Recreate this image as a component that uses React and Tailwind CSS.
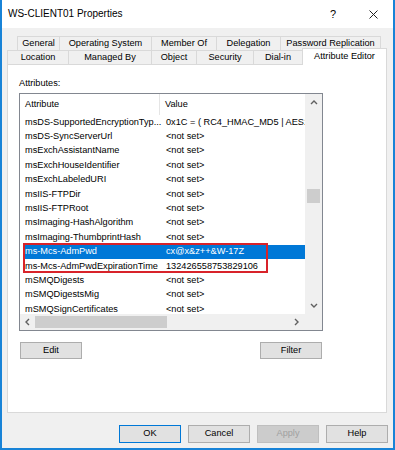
import React from 'react';

const topTabs = [
  { label: 'General', w: 'w-[42px]' },
  { label: 'Operating System', w: 'w-[92px]' },
  { label: 'Member Of', w: 'w-[65px]' },
  { label: 'Delegation', w: 'w-[64px]' },
  { label: 'Password Replication', w: 'w-[101px]' },
];

const bottomTabs = [
  { label: 'Location', w: 'w-[61px]' },
  { label: 'Managed By', w: 'w-[83px]' },
  { label: 'Object', w: 'w-[45px]' },
  { label: 'Security', w: 'w-[57px]' },
  { label: 'Dial-in', w: 'w-[49px]' },
];

const rows = [
  ['msDS-SupportedEncryptionTyp...', '0x1C = ( RC4_HMAC_MD5 | AES128_CTS_HMAC_SHA1_96 )'],
  ['msDS-SyncServerUrl', '<not set>'],
  ['msExchAssistantName', '<not set>'],
  ['msExchHouseIdentifier', '<not set>'],
  ['msExchLabeledURI', '<not set>'],
  ['msIIS-FTPDir', '<not set>'],
  ['msIIS-FTPRoot', '<not set>'],
  ['msImaging-HashAlgorithm', '<not set>'],
  ['msImaging-ThumbprintHash', '<not set>'],
  ['ms-Mcs-AdmPwd', 'cx@x&z++&W-17Z'],
  ['ms-Mcs-AdmPwdExpirationTime', '132426558753829106'],
  ['mSMQDigests', '<not set>'],
  ['mSMQDigestsMig', '<not set>'],
  ['mSMQSignCertificates', '<not set>'],
];

const Chevron = ({ dir }) => {
  const d = {
    up: 'M1 5 L4 2 L7 5',
    down: 'M1 2 L4 5 L7 2',
    left: 'M5 1 L2 4 L5 7',
    right: 'M2 1 L5 4 L2 7',
  }[dir];
  return (
    <svg width="8" height="8" viewBox="0 0 8 8">
      <path d={d} fill="none" stroke="#606060" strokeWidth="1.4" />
    </svg>
  );
};

const Button = ({ children, focused, disabled }) => (
  <div
    className={`w-[62px] h-[18px] flex items-center justify-center border ${
      focused ? 'border-[#0078d7]' : disabled ? 'border-[#bfbfbf]' : 'border-[#adadad]'
    } ${disabled ? 'bg-[#cccccc] text-[#a0a0a0]' : 'bg-[#e1e1e1] text-black'}`}
  >
    {children}
  </div>
);

export default function App() {
  return (
    <div className="w-[395px] h-[450px] bg-[#f0f0f0] border-x-2 border-b-2 border-[#1883d7] flex flex-col font-['Liberation_Sans',Arial,sans-serif] text-[9.2px] text-black overflow-hidden leading-none">
      {/* Title bar */}
      <div className="h-[28px] bg-white flex items-center shrink-0">
        <span className="pl-[6px] text-[10px]">WS-CLIENT01 Properties</span>
        <span className="ml-auto mr-[33px] text-[11px]">?</span>
        <svg width="9" height="9" viewBox="0 0 9 9" className="mr-[15px]">
          <path d="M0.5 0.5 L8.5 8.5 M8.5 0.5 L0.5 8.5" stroke="#222" strokeWidth="1" />
        </svg>
      </div>

      <div className="flex flex-col pl-[5px] pt-[8px]">
        {/* Tabs, row 1 */}
        <div className="flex ml-[10px] h-[14px]">
          {topTabs.map((t, i) => (
            <div
              key={t.label}
              className={`${t.w} h-full flex items-center justify-center border-t border-l border-[#d9d9d9] bg-[#f0f0f0] ${
                i === topTabs.length - 1 ? 'border-r' : ''
              }`}
            >
              {t.label}
            </div>
          ))}
        </div>
        {/* Tabs, row 2 */}
        <div className="flex h-[14px]">
          {bottomTabs.map((t) => (
            <div
              key={t.label}
              className={`${t.w} h-full flex items-center justify-center border-t border-l border-[#d9d9d9] bg-[#f0f0f0]`}
            >
              {t.label}
            </div>
          ))}
          <div className="relative z-10 -mt-[2px] w-[85px] h-[17px] flex items-center justify-center border-t border-x border-[#d9d9d9] bg-white">
            Attribute Editor
          </div>
        </div>

        {/* Panel */}
        <div className="w-[380px] h-[349px] bg-white border border-[#d9d9d9] flex flex-col pl-[11px] pt-[13px]">
          <div className="h-[12px] flex items-center">Attributes:</div>

          <div className="relative mt-[3px] w-[304px] h-[238px] border border-[#828790] flex flex-col">
            <div className="flex h-[220px]">
              {/* Columns */}
              <div className="w-[285px] flex flex-col overflow-hidden">
                <div className="h-[21px] flex items-center shrink-0">
                  <div className="w-[140px] shrink-0 pl-[5px] h-full flex items-center border-r border-[#e5e5e5]">Attribute</div>
                  <div className="pl-[5px]">Value</div>
                </div>
                {rows.map(([a, v], i) => (
                  <div
                    key={a}
                    className={`ml-[3px] h-[14.4px] shrink-0 flex items-center whitespace-nowrap overflow-hidden ${
                      i === 9 ? 'bg-[#0078d7] text-white' : ''
                    }`}
                  >
                    <div className="w-[143px] shrink-0 pl-[2px] overflow-hidden">{a}</div>
                    <div className="shrink-0">{v}</div>
                  </div>
                ))}
              </div>
              {/* Vertical scrollbar */}
              <div className="w-[17px] bg-[#f0f0f0] flex flex-col items-center">
                <div className="h-[17px] flex items-center justify-center">
                  <Chevron dir="up" />
                </div>
                <div className="mt-[78px] w-[13px] h-[14px] bg-[#cdcdcd]" />
                <div className="mt-auto h-[17px] flex items-center justify-center">
                  <Chevron dir="down" />
                </div>
              </div>
            </div>
            {/* Horizontal scrollbar */}
            <div className="flex h-[16px]">
              <div className="w-[285px] bg-[#f0f0f0] flex items-center">
                <div className="w-[15px] flex justify-center">
                  <Chevron dir="left" />
                </div>
                <div className="w-[132px] h-[12px] bg-[#cdcdcd]" />
                <div className="ml-auto w-[17px] flex justify-center">
                  <Chevron dir="right" />
                </div>
              </div>
              <div className="w-[17px] bg-[#f0f0f0]" />
            </div>

            {/* Highlight annotation */}
            <div className="absolute left-[3px] top-[149px] w-[245px] h-[30px] border-2 border-[#d8232a]" />
          </div>

          <div className="mt-[11px] w-[304px] flex justify-between pl-[1px] pr-[1px]">
            <div className="w-[62px] h-[17px] flex items-center justify-center border border-[#adadad] bg-[#e1e1e1]">Edit</div>
            <div className="w-[62px] h-[17px] flex items-center justify-center border border-[#adadad] bg-[#e1e1e1]">Filter</div>
          </div>
        </div>

        {/* Dialog buttons */}
        <div className="mt-[12px] w-[381px] flex justify-end gap-[7px]">
          <Button focused>OK</Button>
          <Button>Cancel</Button>
          <Button disabled>Apply</Button>
          <Button>Help</Button>
        </div>
      </div>
    </div>
  );
}
